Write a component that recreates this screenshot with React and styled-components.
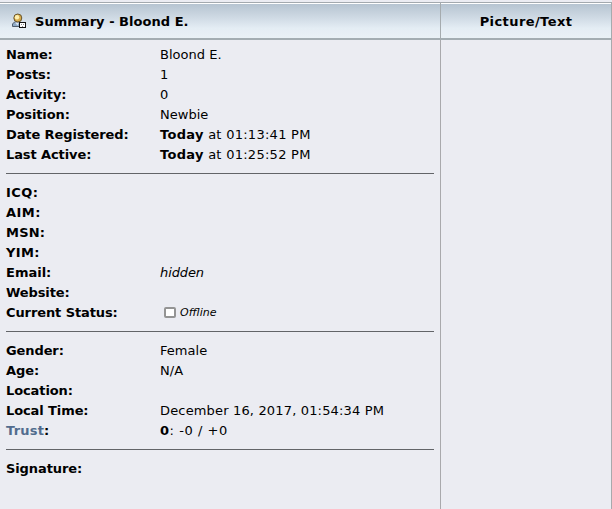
import React from 'react';
import styled, { createGlobalStyle } from 'styled-components';

const Global = createGlobalStyle`
  *{box-sizing:border-box}
  body{margin:0;background:#ebecf2;font-family:Verdana,"DejaVu Sans",sans-serif;font-size:13px;color:#000}
`;
const Page = styled.main`
  display:grid;grid-template-columns:441px 171px;grid-template-rows:38px 1fr;
  width:612px;height:509px;padding-top:2px;overflow:hidden;background:#ebecf2;
`;
const Head = styled.header`
  display:flex;align-items:center;justify-content:${p => p.$center ? 'center' : 'flex-start'};
  padding:${p => p.$center ? '1px 0 0' : '1px 0 0 11px'};gap:9px;
  border-top:1px solid #a3a9ae;border-right:1px solid #a5abae;border-bottom:2px solid #a3adb2;
  background:linear-gradient(#fff 0 1px,#b6c4d1 1px,#cfdae4 42%,#e4edf4 72%,#e9f1f6);
`;
const Title = styled.h1`
  margin:0;font-size:13px;line-height:21px;font-weight:700;white-space:nowrap;
  letter-spacing:${p => p.$ls}px;
`;
const Body = styled.section`padding:5px 6px 0;border-right:1px solid #a9a9ac;`;
const Row = styled.div`display:flex;height:20px;line-height:20px;white-space:nowrap;`;
const Label = styled.b`width:154px;letter-spacing:${p => p.$ls ?? -0.1}px;`;
const Value = styled.span`letter-spacing:${p => p.$ls ?? 0.16}px;`;
const Strong = styled.b`letter-spacing:0.3px;`;
const Link = styled.a`color:#526c8e;`;
const Rule = styled.hr`height:1px;margin:8px 0 9px;border:0;background:#626468;`;
const Status = styled.span`
  display:flex;align-items:center;gap:4px;padding-left:4px;font-size:11px;font-style:italic;
`;
const StatusBox = styled.span`
  width:12px;height:11px;margin-bottom:1px;border:2px solid #949494;border-radius:2px;background:#fff;
`;

const ProfileIcon = () => (
  <svg width="15" height="16" viewBox="0 0 15 16" aria-hidden="true">
    <path d="M1.5 13.5V11L3.5 9H8.5L11 11V13.5Z" fill="#8faac6" stroke="#4f5d6c" />
    <path d="M4 9.5L6.5 12.5L8 9.5Z" fill="#dce8f3" />
    <circle cx="6.8" cy="5" r="4" fill="#d8ab4a" stroke="#5a4a26" strokeWidth="0.9" />
    <circle cx="6" cy="4.2" r="2.2" fill="#fff0b0" />
    <rect x="8.5" y="9.5" width="6" height="5" fill="#fff" stroke="#111" />
    <path d="M10 11h1v1h-1zM12 11h1v1h-1zM11 13h1v1h-1z" fill="#8b8b8b" />
  </svg>
);

const general = [
  ['Name:', 'Bloond E.'],
  ['Posts:', '1'],
  ['Activity:', '0'],
  ['Position:', 'Newbie'],
];
const contacts = [['ICQ:', 0.45], ['AIM:', 0.45], ['MSN:', 0.2], ['YIM:', 0.35]];
const personal = [
  ['Gender:', 'Female'],
  ['Age:', 'N/A'],
  ['Location:', ''],
  ['Local Time:', 'December 16, 2017, 01:54:34 PM'],
];

const Entry = ({ label, ls, children }) => (
  <Row><Label $ls={ls}>{label}</Label>{children}</Row>
);
const List = ({ items }) => items.map(([label, value]) => (
  <Entry key={label} label={label}><Value $ls={value.length < 12 ? 0.03 : 0.16}>{value}</Value></Entry>
));

export default function App() {
  return (
    <>
      <Global />
      <Page>
        <Head><ProfileIcon /><Title $ls={0.03}>Summary - Bloond E.</Title></Head>
        <Head $center><Title $ls={0.42}>Picture/Text</Title></Head>
        <Body>
          <List items={general} />
          <Entry label="Date Registered:"><Value $ls={0.27}><Strong>Today</Strong> at 01:13:41 PM</Value></Entry>
          <Entry label="Last Active:"><Value $ls={0.27}><Strong>Today</Strong> at 01:25:52 PM</Value></Entry>
          <Rule />
          {contacts.map(([label, ls]) => <Entry key={label} label={label} ls={ls} />)}
          <Entry label="Email:" ls={0}><Value $ls={-0.1}><i>hidden</i></Value></Entry>
          <Entry label="Website:" />
          <Entry label="Current Status:"><Status><StatusBox />Offline</Status></Entry>
          <Rule />
          <List items={personal} />
          <Entry label={<><Link>Trust</Link>:</>} ls={0.2}><Value $ls={0.55}><b>0</b>: -0 / +0</Value></Entry>
          <Rule />
          <Entry label="Signature:" />
        </Body>
        <Body />
      </Page>
    </>
  );
}
